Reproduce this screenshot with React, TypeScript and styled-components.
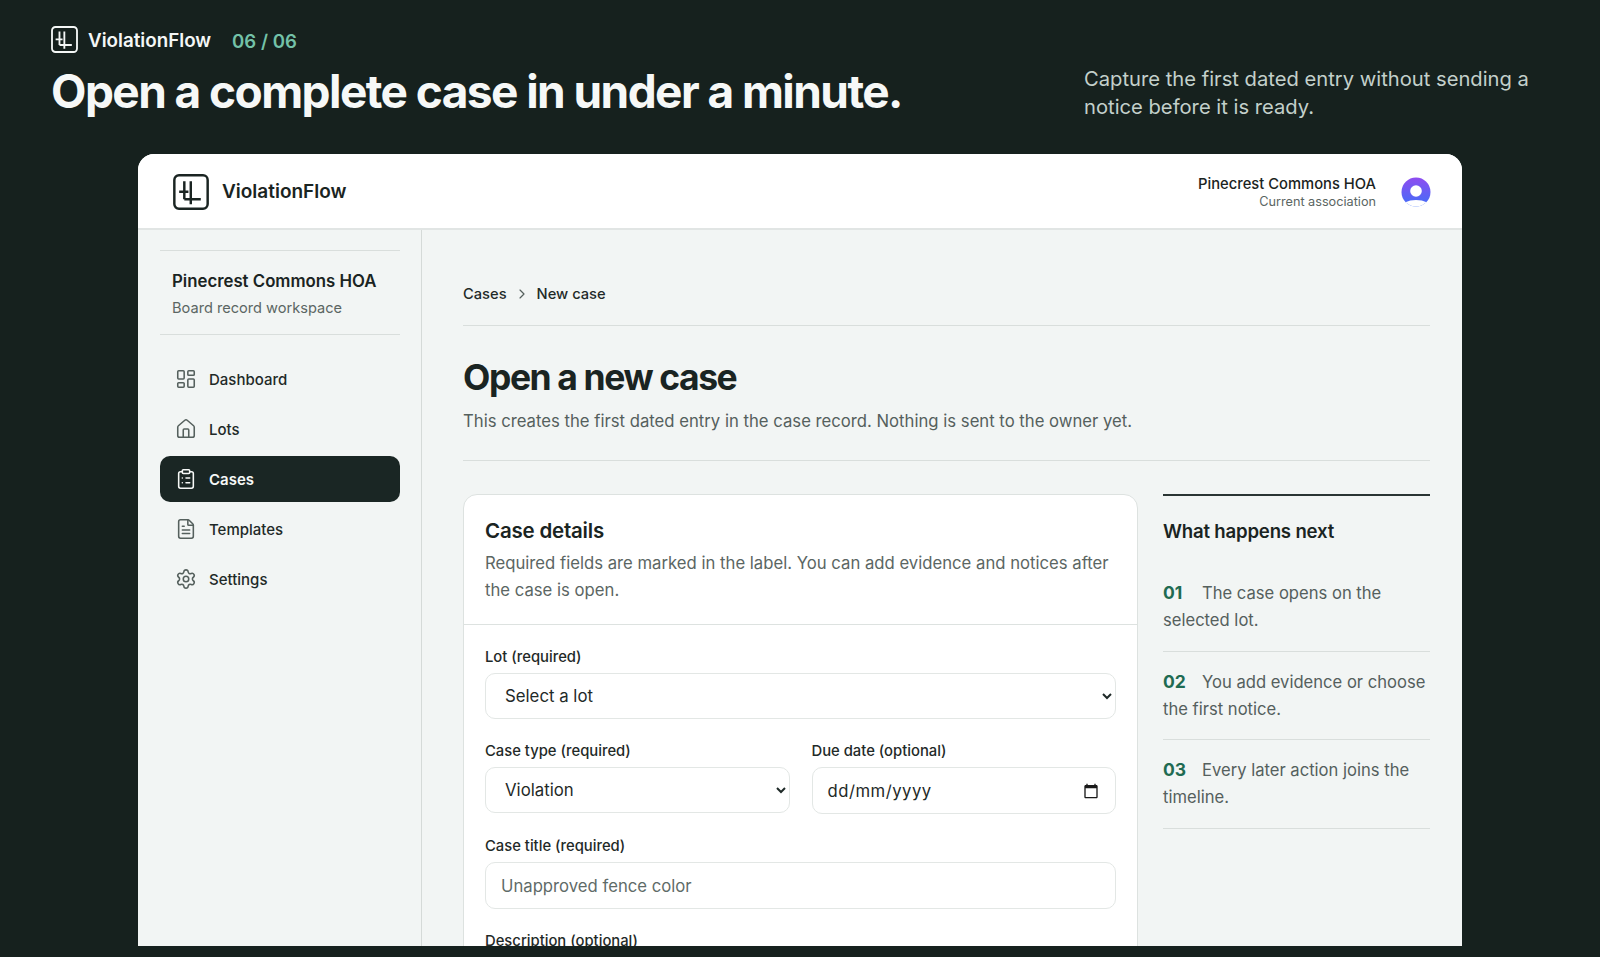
import React from 'react';
import styled, { createGlobalStyle } from 'styled-components';
import { ChevronRight, ClipboardList, FileText, House, LayoutDashboard, Settings } from 'lucide-react';

const GlobalStyle = createGlobalStyle`
  html, body {
    margin: 0;
    padding: 0;
    background: #16211e;
  }
  body {
    font-family: Inter, "Liberation Sans", sans-serif;
    -webkit-font-smoothing: antialiased;
  }
  * {
    box-sizing: border-box;
  }
`;

const Page = styled.div`
  width: 1600px;
  height: 957px;
  overflow: hidden;
  background: #16211e;
`;

const Intro = styled.header`
  height: 154px;
  padding: 26px 51px 0;
`;

const IntroBrand = styled.div`
  display: flex;
  align-items: center;
  gap: 10px;
  height: 27px;
  padding-top: 2px;
  color: #f4f7f6;
  font-size: 18.8px;
  font-weight: 600;

  svg {
    margin-top: -2px;
  }
`;

const Step = styled.span`
  margin-left: 11px;
  color: #73c2a8;
  font-size: 18.6px;
`;

const IntroRow = styled.div`
  display: flex;
  justify-content: space-between;
  align-items: flex-start;
  margin-top: 10px;
`;

const Headline = styled.h1`
  margin: 0;
  color: #f6f8f7;
  font-size: 46px;
  line-height: 56px;
  font-weight: 700;
  letter-spacing: -0.034em;
`;

const IntroText = styled.p`
  width: 465px;
  margin: 2px 0 0;
  color: #c3d0cb;
  font-size: 20.2px;
  line-height: 28px;
`;

const AppWindow = styled.div`
  width: 1324px;
  height: 792px;
  margin: 0 auto;
  overflow: hidden;
  background: #f2f5f4;
  border-radius: 16px 16px 0 0;
`;

const TopBar = styled.div`
  display: flex;
  align-items: center;
  justify-content: space-between;
  height: 76px;
  padding: 1px 31px 0 35px;
  background: #fff;
  border-bottom: 2px solid #e1e5e4;
`;

const TopBrand = styled.div`
  display: flex;
  align-items: center;
  gap: 13px;
  color: #1a2422;
  font-size: 19px;
  font-weight: 600;
`;

const Account = styled.div`
  display: flex;
  align-items: center;
  gap: 25px;
`;

const AccountText = styled.div`
  padding-top: 2px;
  text-align: right;
`;

const AccountName = styled.div`
  color: #1a2422;
  font-size: 14.75px;
  line-height: 18px;
  font-weight: 500;
`;

const AccountRole = styled.div`
  color: #5b6663;
  font-size: 12.7px;
  line-height: 18px;
`;

const Body = styled.div`
  display: grid;
  grid-template-columns: 284px 1fr;
  height: 716px;
`;

const Sidebar = styled.aside`
  padding: 20px 21px 0 22px;
  border-right: 1px solid #d5dad8;
`;

const OrgBlock = styled.div`
  height: 85px;
  padding-top: 19px;
  padding-left: 12px;
  border-top: 1px solid #d9dedc;
  border-bottom: 1px solid #d9dedc;
`;

const OrgName = styled.div`
  color: #1a2422;
  font-size: 16.8px;
  line-height: 22px;
  font-weight: 600;
`;

const OrgSub = styled.div`
  margin-top: 5px;
  color: #5b6663;
  font-size: 14.6px;
  line-height: 22px;
`;

const Nav = styled.nav`
  display: flex;
  flex-direction: column;
  gap: 4px;
  margin-top: 21px;
`;

const NavItem = styled.a<{ $active?: boolean }>`
  display: flex;
  align-items: center;
  gap: 12px;
  height: 46px;
  padding: 0 15px;
  border-radius: 10px;
  color: ${p => (p.$active ? '#f6f8f7' : '#1f2a28')};
  background: ${p => (p.$active ? '#1a2624' : 'transparent')};
  font-size: 15px;
  font-weight: ${p => (p.$active ? 600 : 500)};

  svg {
    color: ${p => (p.$active ? '#f6f8f7' : '#55605d')};
  }
`;

const Main = styled.main`
  padding: 54px 32px 0 41px;
`;

const Breadcrumb = styled.div`
  display: flex;
  align-items: center;
  gap: 7px;
  height: 42px;
  padding-bottom: 22px;
  border-bottom: 1px solid #d9dedc;
  color: #1f2a28;
  font-size: 14.7px;
  line-height: 20px;
  font-weight: 500;

  svg {
    color: #55605d;
  }
`;

const PageHead = styled.div`
  padding: 30px 0 25px;
  border-bottom: 1px solid #d9dedc;
`;

const PageTitle = styled.h2`
  margin: 0;
  color: #1a2422;
  font-size: 35.5px;
  line-height: 44px;
  font-weight: 700;
  letter-spacing: -0.04em;
`;

const PageSub = styled.p`
  margin: 8px 0 0;
  color: #55605d;
  font-size: 16.7px;
  line-height: 27px;
`;

const Columns = styled.div`
  display: grid;
  grid-template-columns: 675px 267px;
  gap: 25px;
  margin-top: 33px;
  align-items: start;
`;

const Card = styled.section`
  background: #fff;
  border: 1px solid #dde2e0;
  border-radius: 14px;
`;

const CardHead = styled.div`
  padding: 22px 21px 20px;
  border-bottom: 1px solid #dde2e0;
`;

const CardTitle = styled.h3`
  margin: 0;
  color: #1a2422;
  font-size: 20.5px;
  line-height: 28px;
  font-weight: 600;
  letter-spacing: -0.01em;
`;

const CardText = styled.p`
  margin: 5px 0 0;
  color: #5b6663;
  font-size: 16.7px;
  line-height: 27px;
`;

const Form = styled.form`
  display: flex;
  flex-direction: column;
  gap: 22px;
  padding: 22px 21px;
`;

const FieldRow = styled.div`
  display: grid;
  grid-template-columns: 1fr 1fr;
  gap: 22px;
`;

const Field = styled.label`
  display: block;
`;

const FieldLabel = styled.span`
  display: block;
  margin-bottom: 6px;
  color: #1f2a28;
  font-size: 14.8px;
  line-height: 20px;
  font-weight: 500;
`;

const Select = styled.select`
  display: block;
  width: 100%;
  height: 46px;
  padding: 0 8px 0 15px;
  background: #fff;
  border: 1px solid #e3e7e5;
  border-radius: 10px;
  color: #1f2a28;
  font-family: inherit;
  font-size: 16.8px;
`;

const Input = styled.input`
  display: block;
  width: 100%;
  height: 47px;
  padding: 0 15px;
  background: #fff;
  border: 1px solid #e3e7e5;
  border-radius: 10px;
  color: #1f2a28;
  font-family: inherit;
  font-size: 16.7px;

  &::placeholder {
    color: #5f6b68;
    opacity: 1;
  }
`;

const DateBox = styled.div`
  display: flex;
  align-items: center;
  justify-content: space-between;
  height: 47px;
  padding: 1px 16px 0 15px;
  background: #fff;
  border: 1px solid #e3e7e5;
  border-radius: 10px;
  color: #1f2a28;
  font-size: 16.7px;
  letter-spacing: 0.5px;
`;

const Aside = styled.aside`
  border-top: 2px solid #2a3533;
`;

const AsideTitle = styled.h3`
  margin: 0;
  padding-top: 21px;
  color: #1a2422;
  font-size: 18.6px;
  line-height: 28px;
  font-weight: 600;
  letter-spacing: -0.01em;
`;

const Steps = styled.ol`
  margin: 18px 0 0;
  padding: 0;
  list-style: none;
`;

const StepItem = styled.li`
  padding: 17px 0 16.5px;
  border-bottom: 1px solid #d9dedc;
  color: #55605d;
  font-size: 16.6px;
  line-height: 27px;
`;

const StepNumber = styled.strong`
  display: inline-block;
  width: 39px;
  color: #1f6b52;
  font-size: 17.5px;
  line-height: 1;
  font-weight: 700;
`;

const Logo = ({ size, color }: { size: number; color: string }) => (
  <svg width={size} height={size} viewBox="0 0 35 35" fill="none" stroke={color} strokeWidth="2.4">
    <rect x="1.3" y="1.3" width="32.4" height="32.4" rx="4.5" />
    <path d="M11 7v17.6M17.3 7v22.5M6 17.3h9M11 24.6h16" />
  </svg>
);

const Avatar = () => (
  <svg width="30" height="30" viewBox="0 0 30 30">
    <defs>
      <linearGradient id="avatarFill" x1="0" y1="0" x2="0" y2="1">
        <stop offset="0" stopColor="#8f4cf0" />
        <stop offset="1" stopColor="#3f6ff8" />
      </linearGradient>
      <clipPath id="avatarClip">
        <circle cx="15" cy="15" r="14.5" />
      </clipPath>
    </defs>
    <circle cx="15" cy="15" r="14.5" fill="url(#avatarFill)" />
    <circle cx="15" cy="14" r="5.8" fill="#fff" />
    <ellipse cx="15" cy="30.5" rx="15" ry="7.5" fill="#fff" clipPath="url(#avatarClip)" />
  </svg>
);

const CalendarIcon = () => (
  <svg width="16" height="16" viewBox="0 0 24 24" fill="#1a1a1a">
    <path d="M20 3h-1V1h-2v2H7V1H5v2H4c-1.1 0-2 .9-2 2v16c0 1.1.9 2 2 2h16c1.1 0 2-.9 2-2V5c0-1.1-.9-2-2-2zm0 18H4V8h16v13z" />
  </svg>
);

const navItems = [
  { label: 'Dashboard', icon: LayoutDashboard },
  { label: 'Lots', icon: House },
  { label: 'Cases', icon: ClipboardList, active: true },
  { label: 'Templates', icon: FileText },
  { label: 'Settings', icon: Settings },
];

const nextSteps = [
  { n: '01', text: 'The case opens on the selected lot.' },
  { n: '02', text: 'You add evidence or choose the first notice.' },
  { n: '03', text: 'Every later action joins the timeline.' },
];

export default function App() {
  return (
    <Page>
      <GlobalStyle />
      <Intro>
        <IntroBrand>
          <Logo size={27} color="#f4f7f6" />
          ViolationFlow
          <Step>06 / 06</Step>
        </IntroBrand>
        <IntroRow>
          <Headline>Open a complete case in under a minute.</Headline>
          <IntroText>Capture the first dated entry without sending a notice before it is ready.</IntroText>
        </IntroRow>
      </Intro>

      <AppWindow>
        <TopBar>
          <TopBrand>
            <Logo size={36} color="#1a2422" />
            ViolationFlow
          </TopBrand>
          <Account>
            <AccountText>
              <AccountName>Pinecrest Commons HOA</AccountName>
              <AccountRole>Current association</AccountRole>
            </AccountText>
            <Avatar />
          </Account>
        </TopBar>

        <Body>
          <Sidebar>
            <OrgBlock>
              <OrgName>Pinecrest Commons HOA</OrgName>
              <OrgSub>Board record workspace</OrgSub>
            </OrgBlock>
            <Nav>
              {navItems.map(({ label, icon: Icon, active }) => (
                <NavItem key={label} $active={active}>
                  <Icon size={22} strokeWidth={1.7} />
                  {label}
                </NavItem>
              ))}
            </Nav>
          </Sidebar>

          <Main>
            <Breadcrumb>
              Cases
              <ChevronRight size={16} strokeWidth={1.75} />
              New case
            </Breadcrumb>
            <PageHead>
              <PageTitle>Open a new case</PageTitle>
              <PageSub>This creates the first dated entry in the case record. Nothing is sent to the owner yet.</PageSub>
            </PageHead>

            <Columns>
              <Card>
                <CardHead>
                  <CardTitle>Case details</CardTitle>
                  <CardText>
                    Required fields are marked in the label. You can add evidence and notices after the case is open.
                  </CardText>
                </CardHead>
                <Form>
                  <Field>
                    <FieldLabel>Lot (required)</FieldLabel>
                    <Select>
                      <option>Select a lot</option>
                    </Select>
                  </Field>
                  <FieldRow>
                    <Field>
                      <FieldLabel>Case type (required)</FieldLabel>
                      <Select>
                        <option>Violation</option>
                      </Select>
                    </Field>
                    <Field>
                      <FieldLabel>Due date (optional)</FieldLabel>
                      <DateBox>
                        dd/mm/yyyy
                        <CalendarIcon />
                      </DateBox>
                    </Field>
                  </FieldRow>
                  <Field>
                    <FieldLabel>Case title (required)</FieldLabel>
                    <Input type="text" placeholder="Unapproved fence color" />
                  </Field>
                  <Field>
                    <FieldLabel>Description (optional)</FieldLabel>
                  </Field>
                </Form>
              </Card>

              <Aside>
                <AsideTitle>What happens next</AsideTitle>
                <Steps>
                  {nextSteps.map(step => (
                    <StepItem key={step.n}>
                      <StepNumber>{step.n}</StepNumber>
                      {step.text}
                    </StepItem>
                  ))}
                </Steps>
              </Aside>
            </Columns>
          </Main>
        </Body>
      </AppWindow>
    </Page>
  );
}
